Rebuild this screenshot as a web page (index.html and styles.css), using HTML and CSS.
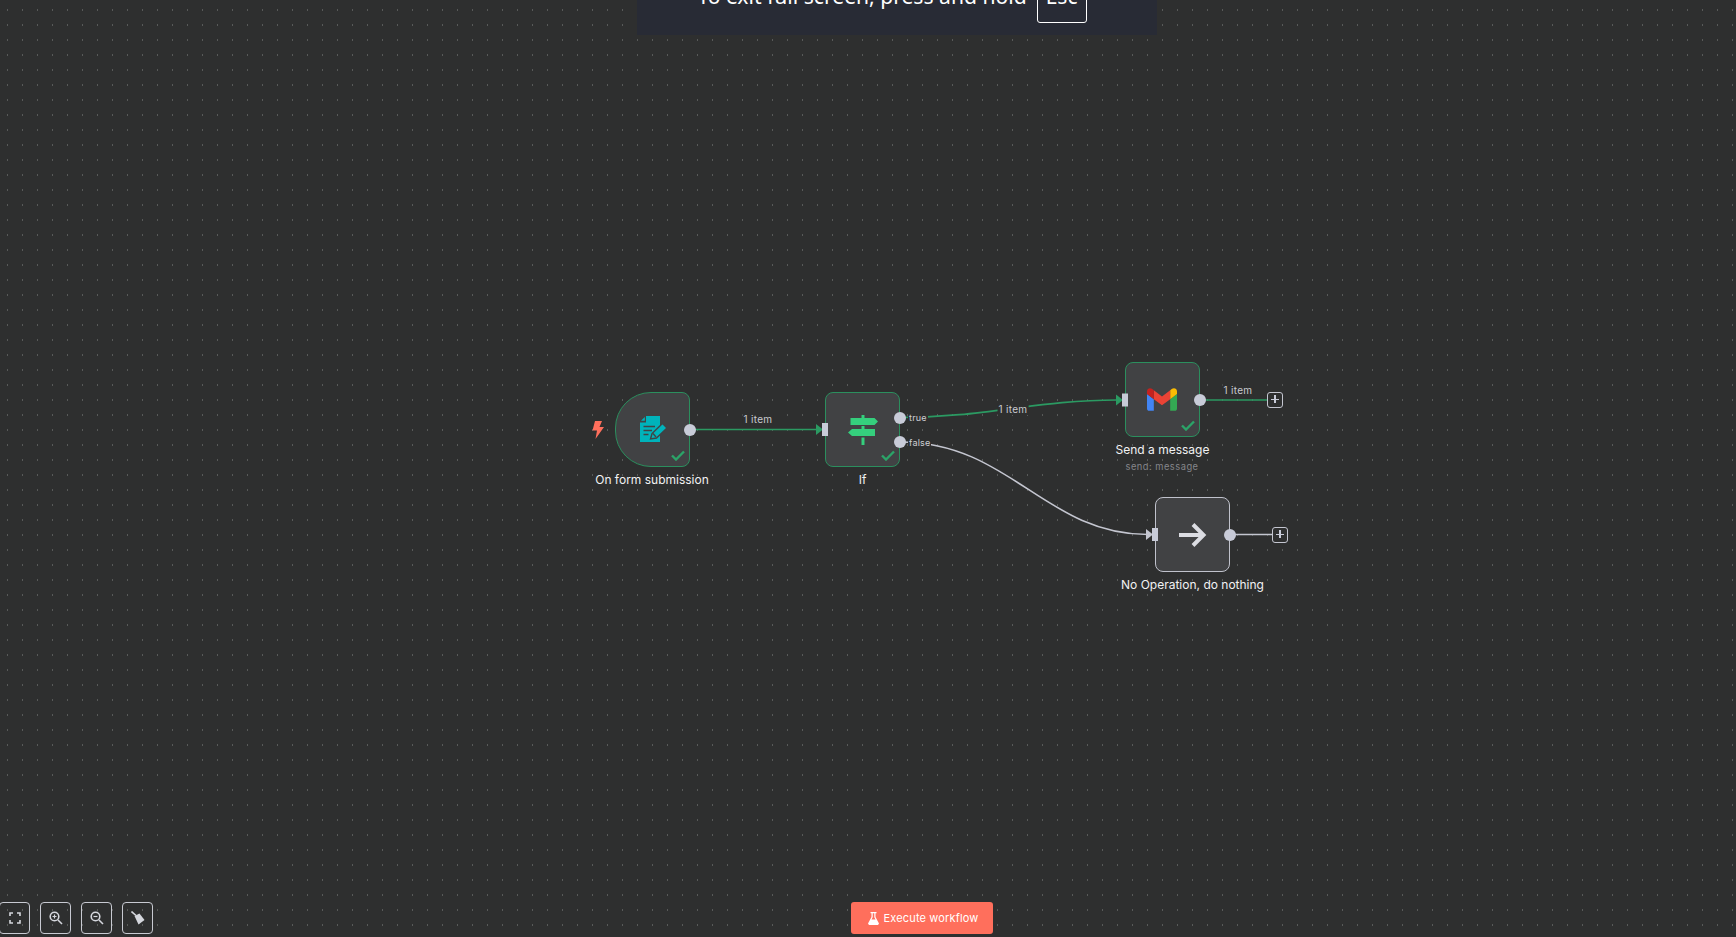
FILE: index.html
```html
<!DOCTYPE html>
<html lang="en">
<head>
    <meta charset="UTF-8">
    <title>Workflow</title>
    <link rel="stylesheet" href="styles.css">
</head>
<body>
    <div class="canvas">
        <!-- connections between nodes -->
        <svg class="edges" width="1736" height="937" viewBox="0 0 1736 937">
            <g class="edge-green">
                <path d="M690 429.5H817"/>
                <path d="M900 417.5C985 417.5 1037 400 1117 400"/>
                <path d="M1200 400H1267"/>
            </g>
            <path class="edge-gray" d="M900 442C1010 442 1045 534.500 1148 534.500"/>
            <path class="edge-gray" d="M1230 534.500H1272"/>
        </svg>

        <svg class="trigger-bolt" width="12" height="18" viewBox="0 0 12 18"><path d="M3 0h7L7.500 6H12L3.500 18 5 9.500H.5z"/></svg>

        <div class="node node-trigger node-ok">
            <svg class="form-icon" width="28" height="27" viewBox="0 0 28 27">
                <path class="form-fill" d="M6 0H20V26H0V6.500H6z"/>
                <path class="form-fill" d="M1 4.800L4.800 1V4.800z"/>
                <path class="form-cut" d="M3.500 10.500H15M3.500 14.500H12M3.500 18.500H8.500"/>
                <path class="form-pen" d="M10.500 23L12 17.500 22.500 7.500 27 12 16.500 22z"/>
                <path class="form-cut" d="M13 17.500L16 21"/>
            </svg>
            <svg class="check" width="14" height="11" viewBox="0 0 14 11"><path d="M1 5.500L5 9.500 13 1.500"/></svg>
        </div>
        <div class="node-title title-trigger">On form submission</div>

        <div class="node node-if node-ok">
            <svg width="30" height="30" viewBox="0 0 30 30">
                <path class="if-fill" d="M13.500 0H16.500V3H26.500L30 6.500 26.500 10H2.500V3H13.500z"/>
                <path class="if-fill" d="M13.500 11H16.500V14H27V21H4L0 17.500 4 14H13.500z"/>
                <path class="if-fill" d="M13.500 22.500H16.500V30H13.500z"/>
            </svg>
            <svg class="check" width="14" height="11" viewBox="0 0 14 11"><path d="M1 5.500L5 9.500 13 1.500"/></svg>
        </div>
        <div class="node-title title-if">If</div>
        <span class="branch branch-true">true</span>
        <span class="branch branch-false">false</span>

        <div class="node node-gmail node-ok">
            <svg class="gmail-icon" width="30" height="23" viewBox="52 42 88 66">
                <path fill="#4285f4" d="M58 108h14V74L52 59v43c0 3.320 2.690 6 6 6"/>
                <path fill="#34a853" d="M120 108h14c3.320 0 6-2.690 6-6V59l-20 15"/>
                <path fill="#fbbc04" d="M120 48v26l20-15v-8c0-7.420-8.470-11.650-14.400-7.200"/>
                <path fill="#ea4335" d="M72 74V48l24 18 24-18v26L96 92"/>
                <path fill="#c5221f" d="M52 51v8l20 15V48l-5.600-4.200c-5.940-4.450-14.400-.22-14.400 7.200"/>
            </svg>
            <svg class="check" width="14" height="11" viewBox="0 0 14 11"><path d="M1 5.500L5 9.500 13 1.500"/></svg>
        </div>
        <div class="node-title title-gmail">Send a message</div>
        <div class="node-sub">send: message</div>

        <div class="node node-noop">
            <svg width="28" height="26" viewBox="0 0 28 26">
                <path class="noop-arrow" d="M0 13H24M14 2.500L24.500 13 14 23.500"/>
            </svg>
        </div>
        <div class="node-title title-noop">No Operation, do nothing</div>

        <!-- arrow heads and inputs sit over the node edge -->
        <svg class="edges" width="1736" height="937" viewBox="0 0 1736 937">
            <path class="arrow-green" d="M816 424l7 5.500-7 5.500z"/>
            <path class="arrow-green" d="M1116 394.500l7 5.500-7 5.500z"/>
            <path class="arrow-gray" d="M1146 529l7 5.500-7 5.500z"/>
            <g class="ports">
                <rect x="822" y="423" width="6" height="13"/>
                <rect x="1122" y="393.500" width="6" height="13"/>
                <rect x="1152" y="528" width="6" height="13"/>
            </g>
        </svg>

        <span class="port port-form"></span>
        <span class="port port-true"></span>
        <span class="port port-false"></span>
        <span class="port port-gmail"></span>
        <span class="port port-noop"></span>

        <span class="edge-label label-a">1 item</span>
        <span class="edge-label label-b">1 item</span>
        <span class="edge-label label-c">1 item</span>

        <span class="add add-gmail"></span>
        <span class="add add-noop"></span>

        <div class="fs-banner">
            <span class="fs-text">To exit full screen, press and hold</span>
            <kbd class="fs-key">Esc</kbd>
        </div>

        <div class="toolbar">
            <button class="tool">
                <svg width="12" height="12" viewBox="0 0 12 12"><path class="tool-line" d="M1 4V1H4M8 1H11V4M11 8V11H8M4 11H1V8"/></svg>
            </button>
            <button class="tool">
                <svg width="14" height="14" viewBox="0 0 14 14"><circle class="tool-line" cx="5.500" cy="5.500" r="4.300"/><path class="tool-line" d="M9 9L13 13"/><path class="tool-thin" d="M3.500 5.500H7.500M5.500 3.500V7.500"/></svg>
            </button>
            <button class="tool">
                <svg width="14" height="14" viewBox="0 0 14 14"><circle class="tool-line" cx="5.500" cy="5.500" r="4.300"/><path class="tool-line" d="M9 9L13 13"/><path class="tool-thin" d="M3.500 5.500H7.500"/></svg>
            </button>
            <button class="tool">
                <svg width="14" height="14" viewBox="0 0 14 14"><path class="tool-fill" d="M3.500 5L8.500 2.500 13.500 9 7.500 13.500z"/><path class="tool-line" d="M0.500 0.500L5 4.500"/></svg>
            </button>
        </div>

        <button class="run-btn">
            <svg width="11" height="13" viewBox="0 0 11 13"><path d="M2.500 0H8.500V1.200H7.500V5L11 11.500 10 13H1L0 11.500 3.500 5V1.200H2.500zM4.700 1.200V5.300L3.500 7.500H7.500L6.300 5.300V1.200z" fill-rule="evenodd"/></svg>
            Execute workflow
        </button>
    </div>
</body>
</html>
```

FILE: styles.css
```css
html, body {
    margin: 0;
    height: 100%;
    overflow: hidden;
    background-color: #2e2f2f;
    font-family: Inter, "Liberation Sans", sans-serif;
}

.canvas {
    position: relative;
    width: 1736px;
    height: 937px;
    overflow: hidden;
    background-image: radial-gradient(circle at 7.5px 10px, #585a59 0, #585a59 0.6px, transparent 1px);
    background-size: 15px 15px;
}

/* edges */
.edges {
    position: absolute;
    top: 0;
    left: 0;
}

.edges path {
    fill: none;
}

.edge-green path {
    stroke: #2b9a62;
    stroke-width: 1.700;
}

.edges .edge-gray {
    stroke: #c4c6d0;
    stroke-width: 1.600;
}

.edges .arrow-green {
    fill: #2b9a62;
}

.edges .arrow-gray {
    fill: #c4c6d0;
}

.ports rect {
    fill: #c8cbd8;
}

.edge-label {
    position: absolute;
    transform: translate(-50%, -50%);
    padding: 0 1px;
    font-size: 10px;
    line-height: 12px;
    letter-spacing: 0.3px;
    color: #c9cacf;
    background-color: #2e2f2f;
}

.label-a { left: 758px; top: 419px; }
.label-b { left: 1013px; top: 408.500px; }
.label-c { left: 1238px; top: 389.500px; }

/* nodes */
.node {
    position: absolute;
    box-sizing: border-box;
    width: 75px;
    height: 75px;
    display: flex;
    align-items: center;
    justify-content: center;
    background-color: #414244;
    border: 1.500px solid #c0c2cc;
    border-radius: 8px;
}

.node-ok {
    border-color: #2b8f5e;
}

.node-trigger {
    left: 615px;
    top: 392px;
    border-radius: 36px 8px 8px 36px;
}

.node-if { left: 825px; top: 392px; }
.node-gmail { left: 1125px; top: 362px; }
.node-noop { left: 1155px; top: 497px; }

.check {
    position: absolute;
    right: 4px;
    bottom: 5px;
}

.check path {
    fill: none;
    stroke: #2ba468;
    stroke-width: 2.400;
}

.form-icon { margin-left: 2px; }
.gmail-icon { margin-left: -1px; }

.form-fill { fill: #00b3bb; }
.form-cut { fill: none; stroke: #414244; stroke-width: 1.400; }
.form-pen { fill: #00b3bb; stroke: #414244; stroke-width: 1.400; }
.if-fill { fill: #35cf7d; }
.noop-arrow { fill: none; stroke: #dcdde3; stroke-width: 4; }

.node-title {
    position: absolute;
    transform: translateX(-50%);
    white-space: nowrap;
    font-size: 12px;
    line-height: 16px;
    color: #f2f2f3;
}

.title-trigger { left: 652px; top: 472px; }
.title-if { left: 862.500px; top: 472px; }
.title-gmail { left: 1162.500px; top: 442px; }
.title-noop { left: 1192.500px; top: 577px; }

.node-sub {
    position: absolute;
    left: 1162px;
    top: 460.500px;
    transform: translateX(-50%);
    white-space: nowrap;
    font-size: 9.300px;
    line-height: 12px;
    letter-spacing: 0.5px;
    color: #85868b;
}

.port {
    position: absolute;
    width: 12px;
    height: 12px;
    border-radius: 50%;
    background-color: #c8cbd8;
}

.port-form { left: 684px; top: 423.500px; }
.port-true { left: 894px; top: 411.500px; }
.port-false { left: 894px; top: 436px; }
.port-gmail { left: 1194px; top: 394px; }
.port-noop { left: 1224px; top: 528.500px; }

.branch {
    position: absolute;
    padding: 0 1px;
    font-size: 9px;
    line-height: 11px;
    letter-spacing: 0.2px;
    color: #cfd0d4;
    background-color: #2e2f2f;
}

.branch-true { left: 908px; top: 412px; }
.branch-false { left: 908px; top: 437px; }

.add {
    position: absolute;
    box-sizing: border-box;
    width: 16px;
    height: 16px;
    border: 1.200px solid #c4c6d0;
    border-radius: 3px;
    background-color: #2e2f2f;
}

.add::before, .add::after {
    content: "";
    position: absolute;
    background-color: #c8cbd8;
}

.add::before { left: 2.800px; top: 6px; width: 8px; height: 1.500px; }
.add::after { left: 6px; top: 2.800px; width: 1.500px; height: 8px; }

.add-gmail { left: 1267px; top: 391.500px; }
.add-noop { left: 1272px; top: 526.500px; }

.trigger-bolt {
    position: absolute;
    left: 592px;
    top: 420.500px;
    fill: #ff6f5c;
}

/* browser full screen notice */
.fs-banner {
    position: absolute;
    left: 637px;
    top: -41px;
    box-sizing: border-box;
    width: 520px;
    height: 76px;
    display: flex;
    align-items: center;
    justify-content: center;
    gap: 10px;
    padding-right: 10px;
    background-color: #282b35;
    font-family: "Noto Sans", sans-serif;
    font-size: 21.100px;
    color: #fff;
}

.fs-text {
    margin-top: -4px;
}

.fs-key {
    box-sizing: border-box;
    width: 50px;
    height: 52px;
    display: flex;
    align-items: center;
    justify-content: center;
    padding-bottom: 4px;
    border: 1.500px solid #fff;
    border-radius: 3px;
    font-family: inherit;
    font-size: 21.100px;
}

/* bottom controls */
.toolbar {
    position: absolute;
    left: -1px;
    bottom: 3px;
    display: flex;
    gap: 10px;
}

.tool {
    box-sizing: border-box;
    width: 31px;
    height: 32px;
    display: flex;
    align-items: center;
    justify-content: center;
    padding: 0;
    background: transparent;
    border: 1.200px solid #c8cad2;
    border-radius: 4px;
}

.tool-line { fill: none; stroke: #d5d7dd; stroke-width: 1.600; }
.tool-thin { fill: none; stroke: #d5d7dd; stroke-width: 1.200; }
.tool-fill { fill: #d5d7dd; }

.run-btn {
    position: absolute;
    left: 851px;
    top: 902px;
    box-sizing: border-box;
    width: 142px;
    height: 32px;
    display: flex;
    align-items: center;
    justify-content: center;
    gap: 5px;
    padding: 0 0 0 2px;
    border: none;
    border-radius: 3px;
    background-color: #ff6f5c;
    color: #fff;
    fill: #fff;
    font-family: inherit;
    font-size: 11px;
    letter-spacing: 0.150px;
}
```
